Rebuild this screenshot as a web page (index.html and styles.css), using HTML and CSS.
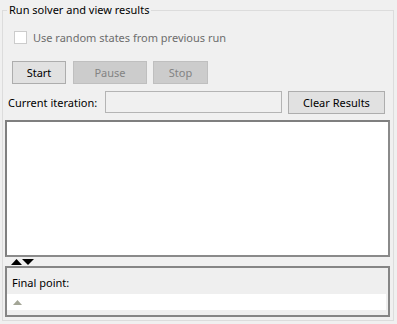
FILE: index.html
```html
<!DOCTYPE html>
<html>
<head>
<meta charset="utf-8">
<link rel="stylesheet" href="styles.css">
</head>
<body>
<fieldset class="group">
  <legend class="group-title">Run solver and view results</legend>
  <div class="check-row">
    <span class="checkbox"></span>
    <span class="check-label">Use random states from previous run</span>
  </div>
  <div class="btn-row">
    <button class="btn btn-start">Start</button>
    <button class="btn btn-pause" disabled>Pause</button>
    <button class="btn btn-stop" disabled>Stop</button>
  </div>
  <div class="iter-row">
    <span class="iter-label">Current iteration:</span>
    <span class="iter-field"></span>
    <button class="btn btn-clear">Clear Results</button>
  </div>
  <div class="results"></div>
  <div class="splitter">
    <svg width="24" height="6" viewBox="0 0 24 6"><polygon points="0,6 5.5,0 11,6" fill="#000"/><polygon points="11,0 23,0 17,6" fill="#000"/></svg>
  </div>
  <div class="final-panel">
    <div class="final-label">Final point:</div>
    <div class="final-field">
      <svg class="final-arrow" width="9" height="6" viewBox="0 0 9 6"><polygon points="0,5 4.5,0 9,5" fill="#a3a596"/></svg>
    </div>
  </div>
</fieldset>
</body>
</html>
```
FILE: styles.css
```css
* { box-sizing: border-box; }
html, body {
  margin: 0;
  padding: 0;
  width: 397px;
  height: 324px;
  background: #f0f0f0;
  overflow: hidden;
  font-family: "Noto Sans", "Open Sans", sans-serif;
  font-size: 11px;
  color: #000;
}
.group {
  margin: 2px 3px 0 2px;
  height: 319px;
  padding: 0;
  border: 1px solid #dcdcdc;
  min-width: 0;
}
.group-title {
  margin-left: 4px;
  padding: 0 2px;
  line-height: 16px;
  height: 16px;
  font-size: 11px;
  color: #000;
}
.check-row {
  display: flex;
  align-items: center;
  gap: 6px;
  height: 15px;
  margin: 12px 0 0 11px;
}
.checkbox {
  width: 13px;
  height: 13px;
  border: 1px solid #cccccc;
  background: #fff;
}
.check-label {
  color: #6d6d6d;
  line-height: 15px;
}
.btn-row {
  display: flex;
  margin: 16px 0 0 9px;
}
.btn {
  font: inherit;
  height: 23px;
  padding: 0;
  border: 1px solid #adadad;
  background: #e1e1e1;
  color: #000;
  line-height: 20px;
}
.btn-start { width: 54px; }
.btn-pause { width: 74px; margin-left: 7px; }
.btn-stop { width: 55px; margin-left: 6px; }
.btn:disabled {
  background: #cccccc;
  border-color: #bfbfbf;
  color: #838383;
}
.iter-row {
  display: flex;
  align-items: center;
  margin: 7px 0 0 5px;
  height: 23px;
}
.iter-label {
  width: 97px;
  white-space: nowrap;
}
.iter-field {
  width: 177px;
  height: 22px;
  border: 1px solid #b4b4b4;
  background: #f0f0f0;
  align-self: flex-start;
}
.btn-clear {
  width: 97px;
  margin-left: 6px;
}
.results {
  margin: 6px 0 0 2px;
  width: 385px;
  height: 137px;
  background: #fff;
  border-top: 2px solid #7f7f7f;
  border-left: 2px solid #7f7f7f;
  border-right: 2px solid #8a8a8a;
  border-bottom: 2px solid #8a8a8a;
}
.splitter {
  height: 9px;
  padding: 2px 0 0 8px;
  line-height: 0;
}
.final-panel {
  margin-left: 2px;
  width: 385px;
  height: 51px;
  background: #efefef;
  border: 2px solid #858585;
  display: flex;
  flex-direction: column;
}
.final-label {
  height: 26px;
  padding: 7px 0 0 5px;
  line-height: 16px;
}
.final-field {
  margin-right: 2px;
  height: 16px;
  background: #fff;
  padding: 6px 0 0 6px;
  line-height: 0;
}
```
